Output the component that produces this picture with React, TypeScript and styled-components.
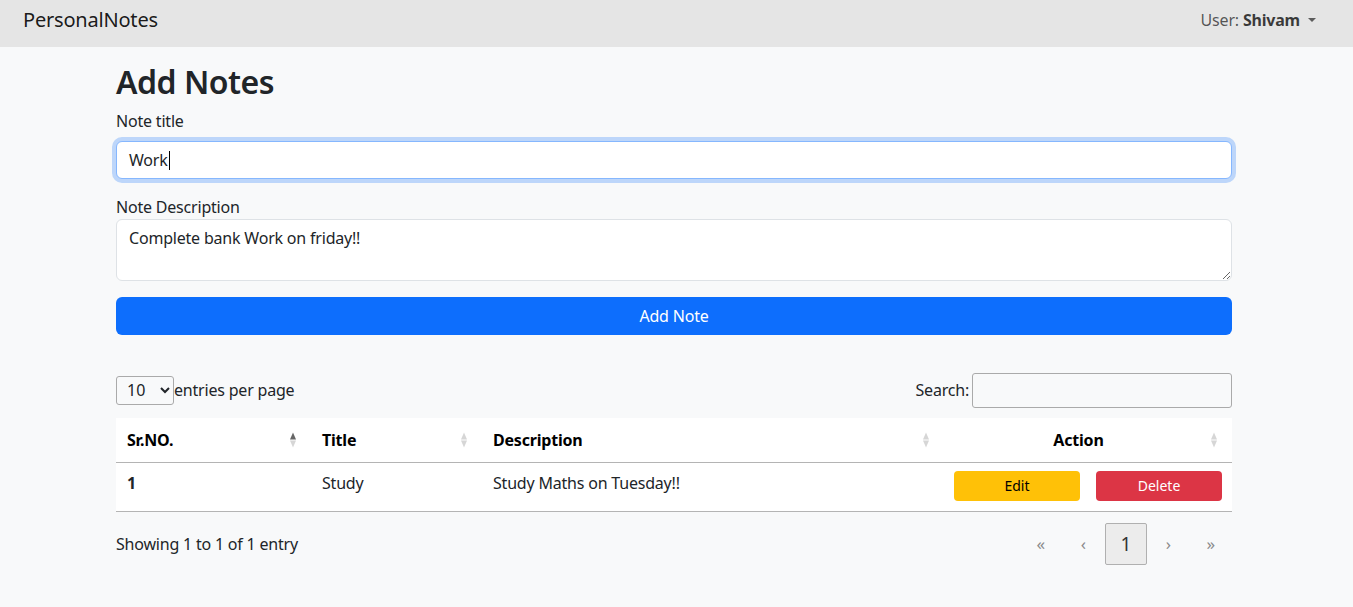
import React from "react";
import styled, { createGlobalStyle } from "styled-components";

const FONT = `"Noto Sans", "Open Sans", sans-serif`;

const Global = createGlobalStyle`
  html, body { margin: 0; padding: 0; }
  body {
    background: #f8f9fa;
    font-family: ${FONT};
    color: #212529;
    font-size: 16px;
    line-height: 1.5;
    letter-spacing: -0.2px;
  }
  *, *::before, *::after { box-sizing: border-box; }
`;

const Nav = styled.nav`
  height: 47px;
  background: #e5e5e5;
  display: flex;
  justify-content: space-between;
  align-items: flex-start;
  padding: 5px 37px 0 23px;
`;

const Brand = styled.a`
  font-size: 20px;
  line-height: 30px;
  color: rgba(0, 0, 0, 0.9);
  text-decoration: none;
`;

const UserMenu = styled.div`
  display: flex;
  align-items: center;
  margin-top: 3px;
  font-size: 16px;
  line-height: 24px;
  color: rgba(0, 0, 0, 0.65);
  b { color: rgba(0, 0, 0, 0.75); margin-left: 4px; }
`;

const Caret = styled.span`
  display: inline-block;
  margin-left: 8px;
  border-top: 4.8px solid rgba(0, 0, 0, 0.6);
  border-left: 4.2px solid transparent;
  border-right: 4.2px solid transparent;
`;

const Main = styled.main`
  width: 1116px;
  margin-left: 116px;
  padding-top: 16px;
`;

const Title = styled.h2`
  font-size: 32px;
  line-height: 1.2;
  font-weight: 600;
  letter-spacing: -0.5px;
  margin: 0 0 8px;
`;

const Label = styled.label<{ $gap: number }>`
  display: block;
  margin-bottom: ${(p) => p.$gap}px;
`;

const Field = styled.div`
  margin-bottom: 16px;
`;

const FakeInput = styled.div`
  height: 38px;
  background: #fff;
  border: 1px solid #86b7fe;
  border-radius: 6px;
  box-shadow: 0 0 0 4px rgba(13, 110, 253, 0.25);
  padding: 6px 12px;
  display: flex;
  align-items: center;
`;

const TextCaret = styled.span`
  display: inline-block;
  width: 1px;
  height: 19px;
  background: #000;
  margin-left: 1px;
`;

const TextArea = styled.textarea`
  display: block;
  width: 100%;
  height: 62px;
  padding: 6px 12px;
  border: 1px solid #dee2e6;
  border-radius: 6px;
  background: #fff;
  font: inherit;
  letter-spacing: inherit;
  color: #212529;
  resize: vertical;
  outline: none;
`;

const PrimaryButton = styled.button`
  display: block;
  width: 100%;
  height: 38px;
  border: none;
  border-radius: 6px;
  background: #0d6efd;
  color: #fff;
  font: inherit;
  letter-spacing: inherit;
`;

const DataTop = styled.div`
  margin-top: 37px;
  margin-bottom: 10px;
  height: 36px;
  display: flex;
  align-items: center;
  justify-content: space-between;
`;

const PerPage = styled.div`
  display: flex;
  align-items: center;
`;

const Select = styled.select`
  width: 58px;
  height: 29px;
  font: inherit;
  color: #212529;
  border: 1px solid #aaa;
  border-radius: 3px;
  background: #f8f9fa;
  padding-left: 6px;
`;

const SearchBox = styled.div`
  display: flex;
  align-items: center;
  gap: 3px;
`;

const SearchInput = styled.input`
  width: 260px;
  height: 35px;
  border: 1px solid #aaa;
  border-radius: 3px;
  background: #f8f9fa;
  font: inherit;
`;

const Table = styled.table`
  width: 100%;
  border-collapse: collapse;
  table-layout: fixed;
  background: #fff;
`;

const Th = styled.th<{ $center?: boolean }>`
  position: relative;
  height: 44px;
  padding: 0 30px 0 11px;
  text-align: ${(p) => (p.$center ? "center" : "left")};
  font-weight: 700;
  color: #000;
  border-bottom: 1px solid #b4b4b4;
  vertical-align: middle;
`;

const Sorter = styled.span<{ $active?: boolean }>`
  position: absolute;
  right: 15px;
  top: 50%;
  transform: translateY(-50%);
  width: 6px;
  height: 15px;
  &::before,
  &::after {
    content: "";
    position: absolute;
    left: 0;
    border-left: 3px solid transparent;
    border-right: 3px solid transparent;
  }
  &::before {
    top: 0;
    border-bottom: 7px solid ${(p) => (p.$active ? "#666" : "#d6d6d6")};
  }
  &::after {
    bottom: 0;
    border-top: 7px solid #d6d6d6;
  }
`;

const Td = styled.td<{ $bold?: boolean }>`
  padding: 8px 11px;
  vertical-align: top;
  border-bottom: 1px solid #b4b4b4;
  font-weight: ${(p) => (p.$bold ? 700 : 400)};
  color: #212529;
`;

const ActionCell = styled.td`
  padding: 8px 10px 10px;
  border-bottom: 1px solid #b4b4b4;
`;

const Actions = styled.div`
  display: flex;
  gap: 16px;
`;

const SmallButton = styled.button<{ $kind: "warn" | "danger" }>`
  flex: 1;
  height: 30px;
  border: none;
  border-radius: 4px;
  font-family: inherit;
  font-size: 14px;
  background: ${(p) => (p.$kind === "warn" ? "#ffc107" : "#dc3545")};
  color: ${(p) => (p.$kind === "warn" ? "#000" : "#fff")};
`;

const DataBottom = styled.div`
  display: flex;
  align-items: center;
  justify-content: space-between;
  padding-top: 11px;
`;

const Pager = styled.ul`
  display: flex;
  list-style: none;
  margin: 0;
  padding: 0;
`;

const PageItem = styled.li<{ $active?: boolean }>`
  width: 42.5px;
  height: 42px;
  display: flex;
  align-items: center;
  justify-content: center;
  border: 1px solid ${(p) => (p.$active ? "#b0b0b0" : "transparent")};
  border-radius: 2px;
  background: ${(p) => (p.$active ? "#ececec" : "transparent")};
  color: ${(p) => (p.$active ? "#333" : "#8a8a8a")};
  font-size: ${(p) => (p.$active ? "19px" : "17px")};
`;

export default function App() {
  return (
    <>
      <Global />
      <Nav>
        <Brand href="#">PersonalNotes</Brand>
        <UserMenu>
          User: <b>Shivam</b>
          <Caret />
        </UserMenu>
      </Nav>
      <Main>
        <Title>Add Notes</Title>
        <Field>
          <Label $gap={8}>Note title</Label>
          <FakeInput>
            Work
            <TextCaret />
          </FakeInput>
        </Field>
        <Field>
          <Label $gap={0}>Note Description</Label>
          <TextArea defaultValue="Complete bank Work on friday!!" />
        </Field>
        <PrimaryButton>Add Note</PrimaryButton>

        <DataTop>
          <PerPage>
            <Select defaultValue="10">
              <option value="5">5</option>
              <option value="10">10</option>
              <option value="15">15</option>
            </Select>
            entries per page
          </PerPage>
          <SearchBox>
            Search:
            <SearchInput type="search" />
          </SearchBox>
        </DataTop>

        <Table>
          <colgroup>
            <col style={{ width: 195 }} />
            <col style={{ width: 171 }} />
            <col style={{ width: 462 }} />
            <col style={{ width: 288 }} />
          </colgroup>
          <thead>
            <tr>
              <Th>
                Sr.NO.
                <Sorter $active />
              </Th>
              <Th>
                Title
                <Sorter />
              </Th>
              <Th>
                Description
                <Sorter />
              </Th>
              <Th $center>
                Action
                <Sorter />
              </Th>
            </tr>
          </thead>
          <tbody>
            <tr>
              <Td $bold>1</Td>
              <Td>Study</Td>
              <Td>Study Maths on Tuesday!!</Td>
              <ActionCell>
                <Actions>
                  <SmallButton $kind="warn">Edit</SmallButton>
                  <SmallButton $kind="danger">Delete</SmallButton>
                </Actions>
              </ActionCell>
            </tr>
          </tbody>
        </Table>

        <DataBottom>
          <span>Showing 1 to 1 of 1 entry</span>
          <Pager>
            <PageItem>«</PageItem>
            <PageItem>‹</PageItem>
            <PageItem $active>1</PageItem>
            <PageItem>›</PageItem>
            <PageItem>»</PageItem>
          </Pager>
        </DataBottom>
      </Main>
    </>
  );
}
